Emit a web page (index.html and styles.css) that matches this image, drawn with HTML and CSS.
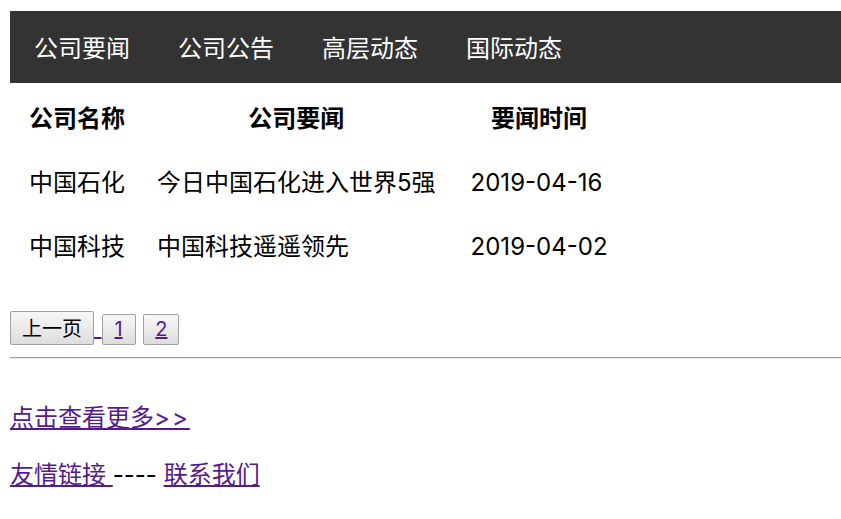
FILE: index.html
```html
<!DOCTYPE html>
<html lang="zh-CN">
<head>
  <meta charset="UTF-8">
  <title>公司要闻</title>
  <link rel="stylesheet" href="styles.css">
</head>
<body>
  <ul class="nav">
    <li>公司要闻</li>
    <li>公司公告</li>
    <li>高层动态</li>
    <li>国际动态</li>
  </ul>

  <table class="news">
    <tr>
      <th>公司名称</th>
      <th>公司要闻</th>
      <th class="time">要闻时间</th>
    </tr>
    <tr>
      <td>中国石化</td>
      <td>今日中国石化进入世界5强</td>
      <td class="time">2019-04-16</td>
    </tr>
    <tr>
      <td>中国科技</td>
      <td>中国科技遥遥领先</td>
      <td class="time">2019-04-02</td>
    </tr>
  </table>

  <div class="pager">
    <a href="#"><button class="btn prev">上一页</button> </a><button class="btn num"><a href="#">1</a></button> <button class="btn num"><a href="#">2</a></button>
  </div>

  <hr class="line">

  <p class="more"><a href="#">点击查看更多<span class="gt">&gt;&gt;</span></a></p>
  <p class="links"><a href="#">友情链接 </a>---- <a href="#">联系我们</a></p>
</body>
</html>
```

FILE: styles.css
```css
body {
  margin: 11px 0 0 10px;
  font-family: Inter, "Noto Sans CJK SC", sans-serif;
  font-size: 24px;
  color: #000;
  background: #fff;
}

a {
  color: #551a8b;
}

/* top menu */
.nav {
  display: flex;
  margin: 0;
  padding: 0;
  list-style: none;
  height: 72px;
  background: #333;
}

.nav li {
  padding: 3px 24px 0;
  line-height: 69px;
  color: #fff;
}

/* news table */
.news {
  margin: 3px 0 0 2px;
  border-spacing: 2px;
}

.news th,
.news td {
  height: 62px;
  padding: 0 15px;
  line-height: 32px;
}

.news .time {
  padding-left: 18px;
}

/* pager */
.pager {
  margin-top: 31px;
  font-size: 20px;
  line-height: 34px;
  word-spacing: 2px;
}

.btn {
  font-family: Inter, "Noto Sans CJK SC", sans-serif;
  font-size: 20px;
  line-height: 24px;
  padding: 2px 11px 3px;
  margin: 0;
  border: 1px solid #a0a0a0;
  border-radius: 2px;
  background: linear-gradient(#f7f7f7, #dddddd);
  color: #000;
  vertical-align: baseline;
}

.btn.prev {
  padding: 5px 11px 3px;
}

.btn.num {
  min-width: 34px;
}

.line {
  margin: 11px 0 0;
  border: none;
  border-top: 1px solid #9a9a9a;
  border-bottom: 1px solid #eee;
}

.more,
.links {
  line-height: 32px;
  margin: 0;
}

.more {
  margin-top: 43px;
}

.more .gt {
  letter-spacing: 2px;
}

.links {
  margin-top: 25px;
}
```
